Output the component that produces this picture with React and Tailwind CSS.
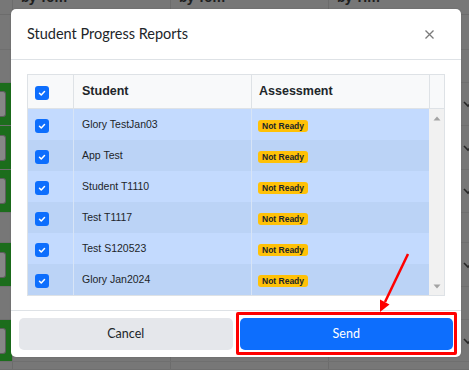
const students = [
  "Glory TestJan03",
  "App Test",
  "Student T1110",
  "Test T1117",
  "Test S120523",
  "Glory Jan2024",
];

const bgRows = [
  { h: "h-[35px]" },
  { h: "h-[33px]" },
  { h: "h-[43px]", green: true },
  { h: "h-[44px]", green: true },
  { h: "h-[43px]", green: true },
  { h: "h-[30px]" },
  { h: "h-[44px]", green: true },
  { h: "h-[33px]" },
  { h: "h-[42px]", green: true },
  { h: "h-[8px]" },
];

function Check() {
  return (
    <span className="flex h-[14px] w-[14px] items-center justify-center rounded-[3px] bg-[#0d6efd]">
      <svg width="10" height="10" viewBox="0 0 20 20" fill="none">
        <path
          d="M5 10.5l3.5 3.5L15 7"
          stroke="white"
          strokeWidth="3"
          strokeLinecap="round"
          strokeLinejoin="round"
        />
      </svg>
    </span>
  );
}

function Background() {
  return (
    <div className="flex h-[370px] flex-col bg-[#777777]">
      <div className="flex h-[15px] border-b border-[#6c6c6c] text-[13px] font-bold text-[#1e1e1e]">
        <div className="w-[13px] border-r border-[#6c6c6c]" />
        <div className="w-[158px] overflow-hidden border-r border-[#6c6c6c] pl-[8px]">
          <div className="-mt-[12px]">by Tom</div>
        </div>
        <div className="w-[158px] overflow-hidden border-r border-[#6c6c6c] pl-[8px]">
          <div className="-mt-[12px]">by Tom</div>
        </div>
        <div className="flex-1 overflow-hidden pl-[8px]">
          <div className="-mt-[12px]">by Tim</div>
        </div>
      </div>
      {bgRows.map((row, i) => (
        <div
          key={i}
          className={`flex ${row.h} border-b border-[#6f6f6f]`}
        >
          <div
            className={`flex w-[13px] items-center ${
              row.green ? "bg-[#1c6d1c]" : ""
            } border-r border-[#6c6c6c]`}
          >
            {row.green && (
              <div className="h-[26px] w-[6px] rounded-r-[3px] border border-l-0 border-[#5e5e5e] bg-[#878787]" />
            )}
          </div>
          <div className="w-[158px] border-r border-[#6c6c6c]" />
          <div className="w-[158px] border-r border-[#6c6c6c]" />
          <div className="flex flex-1 items-center justify-end">
            {row.green && (
              <svg width="10" height="8" viewBox="0 0 10 8" className="-mr-[4px]">
                <path d="M1 2l4 4 4-4" stroke="#262626" strokeWidth="1.6" fill="none" />
              </svg>
            )}
          </div>
        </div>
      ))}
    </div>
  );
}

export default function App() {
  return (
    <div className="relative h-[370px] w-[469px] overflow-hidden">
      <Background />

      <div className="absolute left-[11px] top-[9px] w-[450px] rounded-[5px] bg-white shadow-[0_0_2px_rgba(0,0,0,0.15)]">
        <div className="flex h-[51px] items-center justify-between border-b border-[#dee2e6] pl-4 pr-[27px]">
          <h2 className="text-[14.5px] text-[#212529] [font-family:Lato,'Open_Sans',sans-serif]">
            Student Progress Reports
          </h2>
          <svg width="9" height="9" viewBox="0 0 9 9">
            <path d="M0.5 0.5l8 8M8.5 0.5l-8 8" stroke="#7a7a7a" strokeWidth="1.3" />
          </svg>
        </div>

        <div className="px-4 pb-[14px] pt-[14px]">
          <div className="border border-[#dee2e6] [font-family:'Liberation_Sans',Arial,sans-serif] text-[#212529]">
            <div className="flex h-[34px] border-b border-[#dee2e6] bg-[#f8f9fa]">
              <div className="flex w-[45px] items-center pl-[7px] pt-[3px]">
                <Check />
              </div>
              <div className="flex w-[178px] items-center border-l border-[#dee2e6] pl-[8px] text-[12.5px] font-bold">
                Student
              </div>
              <div className="flex w-[178px] items-center border-l border-[#dee2e6] pl-[7px] text-[12.5px] font-bold">
                Assessment
              </div>
              <div className="flex-1 border-l border-[#dee2e6]" />
            </div>

            <div className="flex">
              <div className="flex w-[401px] flex-col">
                {students.map((name, i) => (
                  <div
                    key={name}
                    className={`flex h-[31px] ${
                      i % 2 === 0 ? "bg-[#c3dafe]" : "bg-[#bbd3f6]"
                    }`}
                  >
                    <div className="flex w-[45px] items-center pl-[7px] pt-[2px]">
                      <Check />
                    </div>
                    <div className="flex w-[178px] items-center border-l border-[#d7e4f6] pl-[8px] text-[10.5px]">
                      {name}
                    </div>
                    <div className="flex w-[178px] items-center border-l border-[#d7e4f6] pl-[6px] pt-[2px]">
                      <span className="rounded-[3px] bg-[#ffc107] px-[4px] py-[1px] text-[8.5px] font-bold leading-[10px] text-[#212529]">
                        Not Ready
                      </span>
                    </div>
                  </div>
                ))}
              </div>
              <div className="flex flex-1 flex-col items-center justify-between bg-[#f1f1f1] pb-[6px] pt-[7px]">
                <svg width="8" height="5" viewBox="0 0 8 5">
                  <path d="M4 0.5L7.5 4.5H0.5z" fill="#a3a3a3" />
                </svg>
                <svg width="8" height="5" viewBox="0 0 8 5">
                  <path d="M4 4.5L7.5 0.5H0.5z" fill="#a3a3a3" />
                </svg>
              </div>
            </div>
          </div>
        </div>

        <div className="flex gap-[7px] border-t border-[#dee2e6] px-2 pb-[7px] pt-[7px] text-[12.5px] [font-family:Lato,'Open_Sans',sans-serif]">
          <button className="h-8 flex-1 rounded-[5px] bg-[#e5e7eb] text-[#212529]">
            Cancel
          </button>
          <div className="relative flex-1">
            <button className="h-8 w-full rounded-[5px] bg-[#0d6efd] text-white">
              Send
            </button>
            <div className="pointer-events-none absolute -inset-x-[4px] -bottom-[5px] -top-[6px] rounded-[2px] border-[3px] border-[#ff0000]" />
          </div>
        </div>
      </div>

      <svg
        className="pointer-events-none absolute left-0 top-0"
        width="469"
        height="370"
        viewBox="0 0 469 370"
      >
        <line x1="408" y1="254" x2="385" y2="302" stroke="#ff0000" strokeWidth="2.5" />
        <path d="M380 312 L389.5 304.5 L380 299.5 Z" fill="#ff0000" />
      </svg>
    </div>
  );
}
